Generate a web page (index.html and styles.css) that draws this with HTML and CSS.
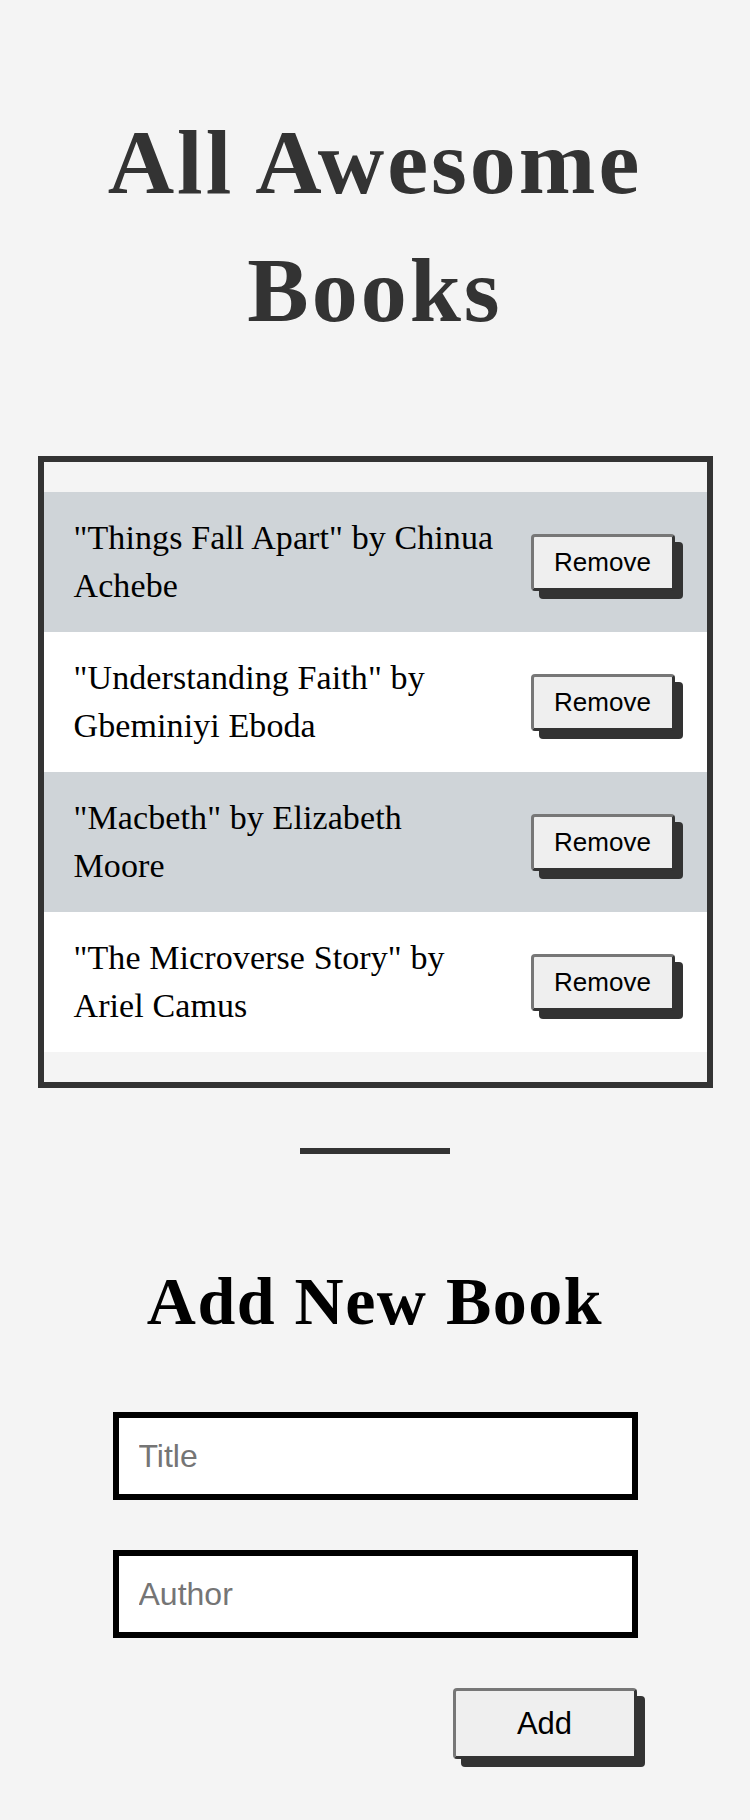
FILE: index.html
```html
<!DOCTYPE html>
<html lang="en">
<head>
<meta charset="utf-8">
<title>Awesome Books</title>
<link rel="stylesheet" href="styles.css">
</head>
<body>
  <header class="page-header">
    <h1 class="page-title">All Awesome Books</h1>
  </header>

  <section class="book-list">
    <div class="book-row book-row--shaded">
      <p class="book-text">"Things Fall Apart" by Chinua Achebe</p>
      <button class="btn btn-remove" type="button">Remove</button>
    </div>
    <div class="book-row">
      <p class="book-text">"Understanding Faith" by Gbeminiyi Eboda</p>
      <button class="btn btn-remove" type="button">Remove</button>
    </div>
    <div class="book-row book-row--shaded">
      <p class="book-text">"Macbeth" by Elizabeth Moore</p>
      <button class="btn btn-remove" type="button">Remove</button>
    </div>
    <div class="book-row">
      <p class="book-text">"The Microverse Story" by Ariel Camus</p>
      <button class="btn btn-remove" type="button">Remove</button>
    </div>
  </section>

  <hr class="divider">

  <section class="add-section">
    <h2 class="add-title">Add New Book</h2>
    <form class="add-form">
      <input class="field" type="text" placeholder="Title">
      <input class="field" type="text" placeholder="Author">
      <button class="btn btn-add" type="button">Add</button>
    </form>
  </section>
</body>
</html>
```

FILE: styles.css
```css
* {
  box-sizing: border-box;
}

html,
body {
  margin: 0;
  padding: 0;
}

body {
  background: #f4f4f4;
  font-family: "Liberation Serif", "Times New Roman", serif;
  color: #000;
  padding-bottom: 54px;
}

.page-header {
  padding-top: 98px;
}

.page-title {
  margin: 0;
  text-align: center;
  font-family: "Liberation Serif", serif;
  font-weight: 700;
  font-size: 92px;
  line-height: 128px;
  letter-spacing: 3px;
  color: #333;
}

.book-list {
  width: 675px;
  margin: 102px auto 0;
  border: 6px solid #333;
  padding: 30px 0;
}

.book-row {
  display: flex;
  align-items: center;
  justify-content: space-between;
  height: 140px;
  padding: 0 32px 0 30px;
  background: #fff;
}

.book-row--shaded {
  background: #cfd4d8;
}

.book-text {
  margin: 0;
  flex: 0 1 424px;
  font-size: 34px;
  line-height: 48px;
  letter-spacing: 0.1px;
  color: #000;
}

.btn {
  font-family: "Liberation Sans", Arial, sans-serif;
  color: #000;
  background: #efefef;
  border: 3px solid;
  border-color: #777 #333 #333 #777;
  border-radius: 4px;
  box-shadow: 8px 8px 0 #333;
  cursor: pointer;
}

.btn-remove {
  flex: none;
  width: 144px;
  font-size: 26px;
  line-height: 29px;
  padding: 11px 0;
}

.divider {
  display: block;
  width: 150px;
  height: 6px;
  margin: 60px auto 0;
  border: none;
  background: #333;
}

.add-section {
  padding-top: 107px;
}

.add-title {
  margin: 0;
  text-align: center;
  font-family: "Liberation Serif", serif;
  font-weight: 700;
  font-size: 68px;
  line-height: 80px;
  letter-spacing: 1.5px;
  color: #000;
}

.add-form {
  width: 525px;
  margin: 71px auto 0;
  display: flex;
  flex-direction: column;
  gap: 50px;
}

.field {
  display: block;
  width: 100%;
  height: 88px;
  padding: 0 20px;
  border: 6px solid #000;
  background: #fff;
  font-family: "Liberation Sans", Arial, sans-serif;
  font-size: 32px;
  color: #000;
  outline: none;
}

.field::placeholder {
  color: #757575;
}

.btn-add {
  align-self: flex-end;
  width: 184px;
  height: 71px;
  margin-right: 1px;
  font-size: 31px;
  padding: 0;
}
```
